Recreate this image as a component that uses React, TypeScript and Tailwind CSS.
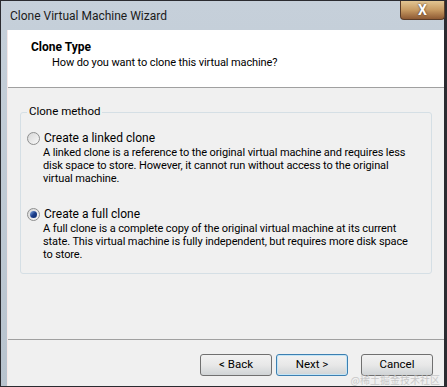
import React from 'react'

const ui = { fontFamily: 'Roboto, "Open Sans", Arial, sans-serif' }

function Radio({ checked }: { checked?: boolean }) {
  return (
    <span className="relative flex h-[13px] w-[13px] shrink-0 items-center justify-center rounded-full border border-[#8e8f8f] bg-gradient-to-br from-[#d8d8d8] to-[#f8f8f8]">
      {checked && (
        <span className="h-[7px] w-[7px] rounded-full bg-gradient-to-br from-[#8fb4e8] via-[#1d3f8c] to-[#0a2a6a]" />
      )}
    </span>
  )
}

function Option({ label, desc, checked }: { label: string; desc: string[]; checked?: boolean }) {
  return (
    <div className="flex flex-col">
      <div className="flex items-center gap-[4px] text-[12px] leading-[15px] text-black">
        <Radio checked={checked} />
        <span>{label}</span>
      </div>
      <div className="whitespace-nowrap pl-[16px] text-[11px] leading-[13px] tracking-[-0.1px] text-black">
        {desc.map((l) => (
          <div key={l}>{l}</div>
        ))}
      </div>
    </div>
  )
}

function Button({ children, active }: { children: React.ReactNode; active?: boolean }) {
  return (
    <button
      className={
        'block h-[22px] w-[72px] rounded-[3px] border bg-gradient-to-b from-[#f2f2f2] via-[#e8e8e8] to-[#d0d4d6] text-[11.5px] text-black ' +
        (active ? 'border-[#3c7fb1] shadow-[inset_0_0_0_1px_#c4e5f6]' : 'border-[#707070]')
      }
    >
      {children}
    </button>
  )
}

export default function App() {
  return (
    <div className="h-[387px] w-[447px] overflow-hidden bg-[#2b2b30] p-[1px] pr-[3px]" style={ui}>
      <div className="flex h-full flex-col bg-gradient-to-b from-[#c6d0da] to-[#b8c3ce] pl-[6px] pr-0">
        <div className="relative flex h-[29px] shrink-0 items-center pl-[3px]">
          <span className="text-[12px] text-[#1b1b1b]">Clone Virtual Machine Wizard</span>
          <div className="absolute right-[-1px] top-0 flex h-[19px] w-[45px] items-center justify-center rounded-b-[4px] border border-t-0 border-[#5a3c28] bg-gradient-to-b from-[#e2c592] via-[#c79a62] to-[#8e5a34]">
            <span className="text-[14px] font-bold leading-none text-white [text-shadow:0_0_2px_#3a2010]">X</span>
          </div>
        </div>
        <div className="flex flex-1 flex-col border-l border-[#f4e8e8] bg-[#f0f0f0]">
          <div className="flex h-[58px] shrink-0 flex-col border-b border-[#a0a0a0] bg-white pl-[23px] pt-[10px]">
            <div className="text-[12px] font-bold leading-[15px] text-black">Clone Type</div>
            <div className="pl-[21px] text-[11px] leading-[15px] tracking-[-0.1px] text-black">How do you want to clone this virtual machine?</div>
          </div>
          <div className="flex flex-1 flex-col px-[12px] pt-[24px]">
            <div className="relative h-[162px] rounded-[3px] border border-[#d5dfe5] pl-[6px] pr-[8px] pt-[18px]">
              <span className="absolute left-[6px] top-[-9px] bg-[#f0f0f0] px-[2px] text-[11.5px] leading-[15px] text-black">
                Clone method
              </span>
              <div className="flex flex-col gap-[22px]">
                <Option
                  label="Create a linked clone"
                  desc={[
                    'A linked clone is a reference to the original virtual machine and requires less',
                    'disk space to store. However, it cannot run without access to the original',
                    'virtual machine.',
                  ]}
                />
                <Option
                  checked
                  label="Create a full clone"
                  desc={[
                    'A full clone is a complete copy of the original virtual machine at its current',
                    'state. This virtual machine is fully independent, but requires more disk space',
                    'to store.',
                  ]}
                />
              </div>
            </div>
          </div>
          <div className="relative flex h-[47px] shrink-0 items-start justify-end border-t border-[#a0a0a0] pr-[11px] pt-[14px]">
            <div className="flex gap-[4px]">
              <Button>&lt; Back</Button>
              <Button active>Next &gt;</Button>
            </div>
            <div className="ml-[13px] flex">
              <Button>Cancel</Button>
            </div>
            <span className="absolute bottom-[0px] right-[4px] text-[10px] leading-[12px] text-[#c8c8c8]" style={{ fontFamily: '"Noto Sans CJK SC", sans-serif' }}>
              @稀土掘金技术社区
            </span>
          </div>
        </div>
      </div>
    </div>
  )
}
